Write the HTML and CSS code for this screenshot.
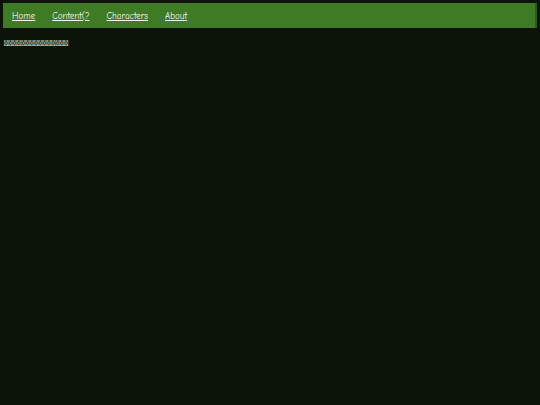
FILE: index.html
```html
<!DOCTYPE html>
<html>
<head>
<meta charset="utf-8">
<link rel="stylesheet" href="styles.css">
</head>
<body>
<nav class="nav">
  <a href="#">Home</a>
  <a href="#">Content(?</a>
  <a href="#">Characters</a>
  <a href="#">About</a>
</nav>
<p class="intro">&#xE000;&#xE001;&#xE002;&#xE003;&#xE004;&#xE005;&#xE006;&#xE007;&#xE008;&#xE009;&#xE00A;&#xE00B;&#xE00C;&#xE00D;&#xE00E;</p>
</body>
</html>
```

FILE: styles.css
```css
html, body {
  margin: 0;
  padding: 0;
  background: #0c140a;
  height: 100%;
}
body {
  padding: 3px;
  box-sizing: border-box;
  font-family: "Comic Sans MS", "Comic Neue", cursive;
}
.nav {
  background: #3f7a25;
  height: 25px;
  display: flex;
  align-items: center;
  gap: 17px;
  padding: 0 9px;
  border-right: 2px solid #2f5a1d;
}
.nav a {
  color: #f2f8ee;
  font-size: 9px;
  text-decoration: underline;
}
.intro {
  margin: 10px 0 0 1px;
  color: #dde4d8;
  font-size: 8.5px;
  line-height: 10px;
}
```
